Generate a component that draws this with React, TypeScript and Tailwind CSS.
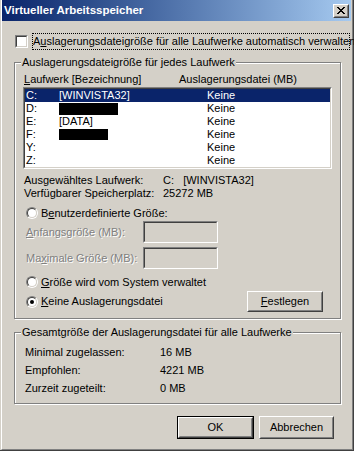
import React from "react";

const F = "font-['Liberation_Sans',Arial,sans-serif] text-[11px] text-black";

function Sunken({ className = "", inner = "bg-white", children }: { className?: string; inner?: string; children?: React.ReactNode }) {
  return (
    <div className={"border border-t-[#808080] border-l-[#808080] border-b-white border-r-white " + className}>
      <div className={"w-full h-full border border-t-[#404040] border-l-[#404040] border-b-[#d4d0c8] border-r-[#d4d0c8] " + inner}>
        {children}
      </div>
    </div>
  );
}

function Radio({ checked = false }: { checked?: boolean }) {
  return (
    <div className="w-[12px] h-[12px] shrink-0 rounded-full border border-t-[#808080] border-l-[#808080] border-b-white border-r-white">
      <div className="w-full h-full rounded-full border border-t-[#404040] border-l-[#404040] border-b-[#d4d0c8] border-r-[#d4d0c8] bg-white flex items-center justify-center">
        {checked && <div className="w-[4px] h-[4px] rounded-full bg-black" />}
      </div>
    </div>
  );
}

function Button({ children, className = "", def = false }: { children: React.ReactNode; className?: string; def?: boolean }) {
  const btn = (
    <div className="w-full h-full border border-t-white border-l-white border-b-[#404040] border-r-[#404040]">
      <div className="w-full h-full border border-t-[#d4d0c8] border-l-[#d4d0c8] border-b-[#808080] border-r-[#808080] flex items-center justify-center bg-[#d4d0c8]">
        {children}
      </div>
    </div>
  );
  if (def) return <div className={"border border-black shrink-0 " + className}>{btn}</div>;
  return <div className={"shrink-0 " + className}>{btn}</div>;
}

function Group({ label, className = "", children }: { label: string; className?: string; children: React.ReactNode }) {
  return (
    <div className={"relative w-[327px] border border-[#808080] shadow-[inset_1px_1px_0_#fff,1px_1px_0_#fff] " + className}>
      <div className="absolute -top-[7px] left-[6px] px-[1px] bg-[#d4d0c8] leading-[13px] whitespace-nowrap">{label}</div>
      {children}
    </div>
  );
}

const Dis = ({ children }: { children: React.ReactNode }) => (
  <span className="text-[#808080] [text-shadow:1px_1px_0_#fff] whitespace-nowrap">{children}</span>
);

const rows: { l: string; n: React.ReactNode; sel?: boolean }[] = [
  { l: "C:", n: "[WINVISTA32]", sel: true },
  { l: "D:", n: <div className="w-[59px] h-[12px] bg-black" /> },
  { l: "E:", n: "[DATA]" },
  { l: "F:", n: <div className="w-[49px] h-[11px] bg-black" /> },
  { l: "Y:", n: "" },
  { l: "Z:", n: "" },
];

export default function App() {
  return (
    <div className={"w-[354px] h-[451px] bg-[#d4d0c8] border-r border-b border-[#404040] pl-[1px] " + F}>
      <div className="w-full h-full border-l border-white border-r border-b border-r-[#808080] border-b-[#808080] flex flex-col">
        {/* title bar */}
        <div className="h-[21px] mr-[1px] bg-gradient-to-r from-[#0a246a] to-[#a6caf0] flex items-center justify-between pl-[2px] pr-[2px]">
          <span className="text-white font-bold text-[11.5px] leading-[13px] whitespace-nowrap">Virtueller Arbeitsspeicher</span>
          <div className="w-[16px] h-[14px] shrink-0 bg-[#d4d0c8] border border-t-white border-l-white border-b-[#404040] border-r-[#404040]">
            <div className="w-full h-full border border-t-[#d4d0c8] border-l-[#d4d0c8] border-b-[#808080] border-r-[#808080] flex items-center justify-center">
              <svg width="8" height="7" viewBox="0 0 8 7" shapeRendering="crispEdges" className="block">
                <path d="M0 0h2v1H0zM6 0h2v1H6zM1 1h2v1H1zM5 1h2v1H5zM2 2h4v1H2zM3 3h2v1H3zM2 4h4v1H2zM1 5h2v1H1zM5 5h2v1H5zM0 6h2v1H0zM6 6h2v1H6z" fill="#000" />
              </svg>
            </div>
          </div>
        </div>

        <div className="pl-[12px] flex flex-col">
          {/* checkbox row */}
          <div className="mt-[12px] h-[17px] flex items-center">
            <Sunken className="ml-[1px] w-[13px] h-[13px] shrink-0" />
            <div className="ml-[4px] w-[318px] h-[17px] border border-dotted border-black flex items-center whitespace-nowrap leading-[13px]">
              <span>A<u>u</u>slagerungsdateigröße für alle Laufwerke automatisch verwalten</span>
            </div>
          </div>

          {/* group 1 */}
          <Group label="Auslagerungsdateigröße für jedes Laufwerk" className="mt-[12px] pt-[10px] pb-[6px]">
            <div className="h-[13px] leading-[13px] flex pl-[9px] whitespace-nowrap">
              <span className="w-[155px]"><u>L</u>aufwerk [Bezeichnung]</span>
              <span>Auslagerungsdatei (MB)</span>
            </div>
            <Sunken className="mt-[1px] ml-[8px] w-[309px] h-[82px]">
              {rows.map((r) => (
                <div key={r.l} className={"h-[13px] leading-[13px] flex items-center whitespace-nowrap " + (r.sel ? "bg-[#0a246a] text-white" : "")}>
                  <span className="w-[34px] pl-[1px]">{r.l}</span>
                  <span className="w-[148px] flex items-center">{r.n}</span>
                  <span>Keine</span>
                </div>
              ))}
            </Sunken>
            <div className="mt-[5px] pl-[9px] flex flex-col">
              <div className="h-[13px] leading-[13px] flex whitespace-nowrap">
                <span className="w-[139px]">Ausgewähltes Laufwerk:</span>
                <span>C:&nbsp;&nbsp;&nbsp;[WINVISTA32]</span>
              </div>
              <div className="h-[13px] leading-[13px] flex whitespace-nowrap">
                <span className="w-[139px]">Verfügbarer Speicherplatz:</span>
                <span>25272 MB</span>
              </div>
            </div>
            <div className="mt-[6px] h-[14px] flex items-center pl-[11px]">
              <Radio />
              <span className="ml-[3px] leading-[13px] whitespace-nowrap">B<u>e</u>nutzerdefinierte Größe:</span>
            </div>
            <div className="mt-[1px] h-[22px] flex items-center pl-[11px]">
              <span className="w-[117px]"><Dis><u>A</u>nfangsgröße (MB):</Dis></span>
              <Sunken className="w-[75px] h-[22px]" inner="bg-[#d4d0c8]" />
            </div>
            <div className="mt-[4px] h-[22px] flex items-center pl-[11px]">
              <span className="w-[117px]"><Dis>Ma<u>x</u>imale Größe (MB):</Dis></span>
              <Sunken className="w-[75px] h-[22px]" inner="bg-[#d4d0c8]" />
            </div>
            <div className="mt-[6px] h-[14px] flex items-center pl-[11px]">
              <Radio />
              <span className="ml-[3px] leading-[13px] whitespace-nowrap"><u>G</u>röße wird vom System verwaltet</span>
            </div>
            <div className="mt-[2px] h-[21px] flex items-center pl-[11px]">
              <Radio checked />
              <span className="ml-[3px] w-[206px] leading-[13px] whitespace-nowrap"><u>K</u>eine Auslagerungsdatei</span>
              <Button className="w-[76px] h-[21px]"><span><u>F</u>estlegen</span></Button>
            </div>
          </Group>

          {/* group 2 */}
          <Group label="Gesamtgröße der Auslagerungsdatei für alle Laufwerke" className="mt-[13px] pt-[10px] pb-[6px]">
            {[
              ["Minimal zugelassen:", "16 MB"],
              ["Empfohlen:", "4221 MB"],
              ["Zurzeit zugeteilt:", "0 MB"],
            ].map(([a, b]) => (
              <div key={a} className="h-[18px] flex items-center pl-[10px] whitespace-nowrap">
                <span className="w-[135px]">{a}</span>
                <span>{b}</span>
              </div>
            ))}
          </Group>

          {/* buttons */}
          <div className="mt-[12px] h-[23px] flex gap-[5px] pl-[163px]">
            <Button def className="w-[77px] h-[23px]"><span>OK</span></Button>
            <Button className="w-[75px] h-[23px]"><span>Abbrechen</span></Button>
          </div>
        </div>
      </div>
    </div>
  );
}
